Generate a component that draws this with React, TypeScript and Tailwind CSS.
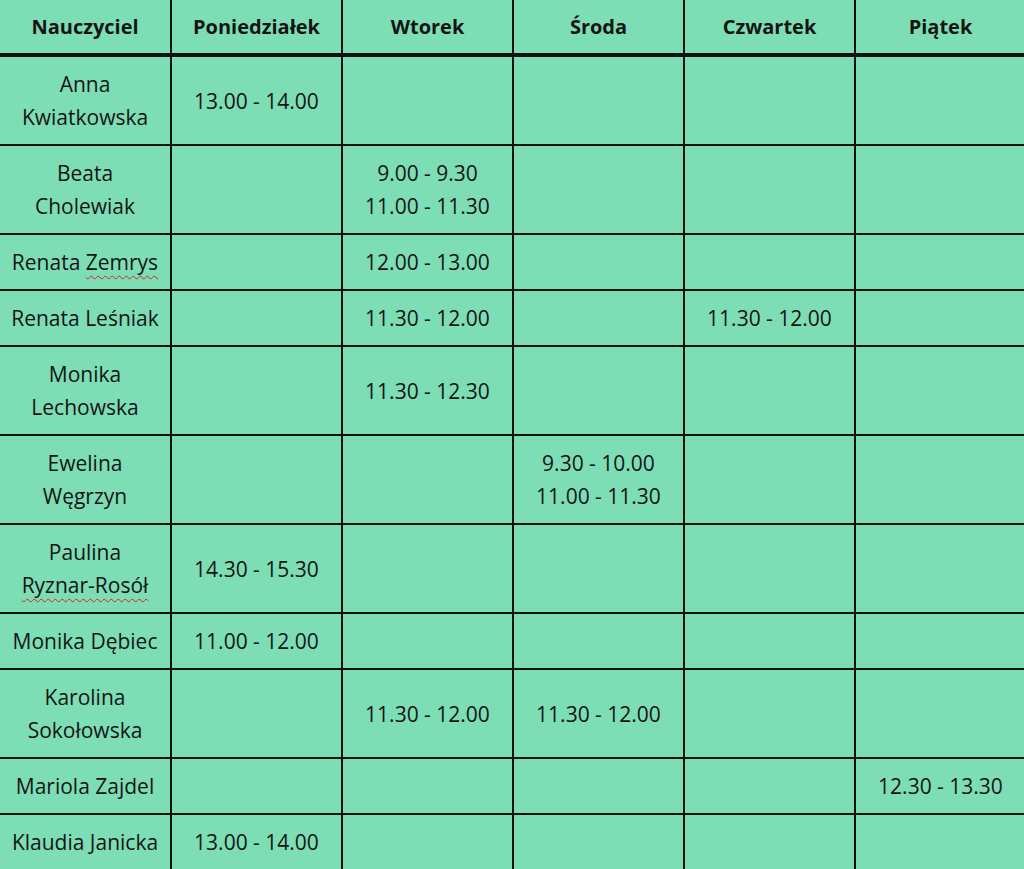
const days = ["Poniedziałek", "Wtorek", "Środa", "Czwartek", "Piątek"];

type Row = { name: string[]; wavy?: number; slots: (string[] | null)[] };

const rows: Row[] = [
  { name: ["Anna", "Kwiatkowska"], slots: [["13.00 - 14.00"], null, null, null, null] },
  { name: ["Beata", "Cholewiak"], slots: [null, ["9.00 - 9.30", "11.00 - 11.30"], null, null, null] },
  { name: ["Renata Zemrys"], wavy: 0, slots: [null, ["12.00 - 13.00"], null, null, null] },
  { name: ["Renata Leśniak"], slots: [null, ["11.30 - 12.00"], null, ["11.30 - 12.00"], null] },
  { name: ["Monika", "Lechowska"], slots: [null, ["11.30 - 12.30"], null, null, null] },
  { name: ["Ewelina", "Węgrzyn"], slots: [null, null, ["9.30 - 10.00", "11.00 - 11.30"], null, null] },
  { name: ["Paulina", "Ryznar-Rosół"], wavy: 1, slots: [["14.30 - 15.30"], null, null, null, null] },
  { name: ["Monika Dębiec"], slots: [["11.00 - 12.00"], null, null, null, null] },
  { name: ["Karolina", "Sokołowska"], slots: [null, ["11.30 - 12.00"], ["11.30 - 12.00"], null, null] },
  { name: ["Mariola Zajdel"], slots: [null, null, null, null, ["12.30 - 13.30"]] },
  { name: ["Klaudia Janicka"], slots: [["13.00 - 14.00"], null, null, null, null] },
];

const Wavy = ({ text }: { text: string }) => {
  // spell-check squiggle only under the surname, like in the editor
  const i = text.indexOf(" ");
  if (i === -1) {
    return <span className="underline decoration-wavy decoration-[#d22] decoration-1 underline-offset-[5px]">{text}</span>;
  }
  return (
    <>
      {text.slice(0, i + 1)}
      <span className="underline decoration-wavy decoration-[#d22] decoration-1 underline-offset-[5px]">{text.slice(i + 1)}</span>
    </>
  );
};

const App = () => {
  return (
    <div className="w-[1024px] h-[869px] overflow-hidden bg-[#7ddeb6]">
      <table
        className="table-fixed border-collapse w-[1026px] text-[#141414] text-[21px] leading-[33px]"
        style={{ fontFamily: '"Open Sans", "Noto Sans", sans-serif' }}
      >
        <thead>
          <tr>
            <th className="w-[171px] py-[10px] text-[20px] border-r-2 border-b-4 border-[#111] font-bold">Nauczyciel</th>
            {days.map((d) => (
              <th key={d} className="w-[171px] py-[10px] text-[20px] border-x-2 border-b-4 border-[#111] font-bold">
                {d}
              </th>
            ))}
          </tr>
        </thead>
        <tbody>
          {rows.map((row, index) => (
            <tr key={index}>
              <td className="pt-[11px] pb-[10px] border-r-2 border-y-2 border-[#111] text-center align-middle">
                {row.name.map((n, j) => (
                  <div key={j}>{row.wavy === j ? <Wavy text={n} /> : n}</div>
                ))}
              </td>
              {row.slots.map((slot, k) => (
                <td key={k} className="pt-[11px] pb-[10px] border-2 border-[#111] text-center align-middle">
                  {slot?.map((s, j) => <div key={j}>{s}</div>)}
                </td>
              ))}
            </tr>
          ))}
        </tbody>
      </table>
    </div>
  );
};

export default App;
